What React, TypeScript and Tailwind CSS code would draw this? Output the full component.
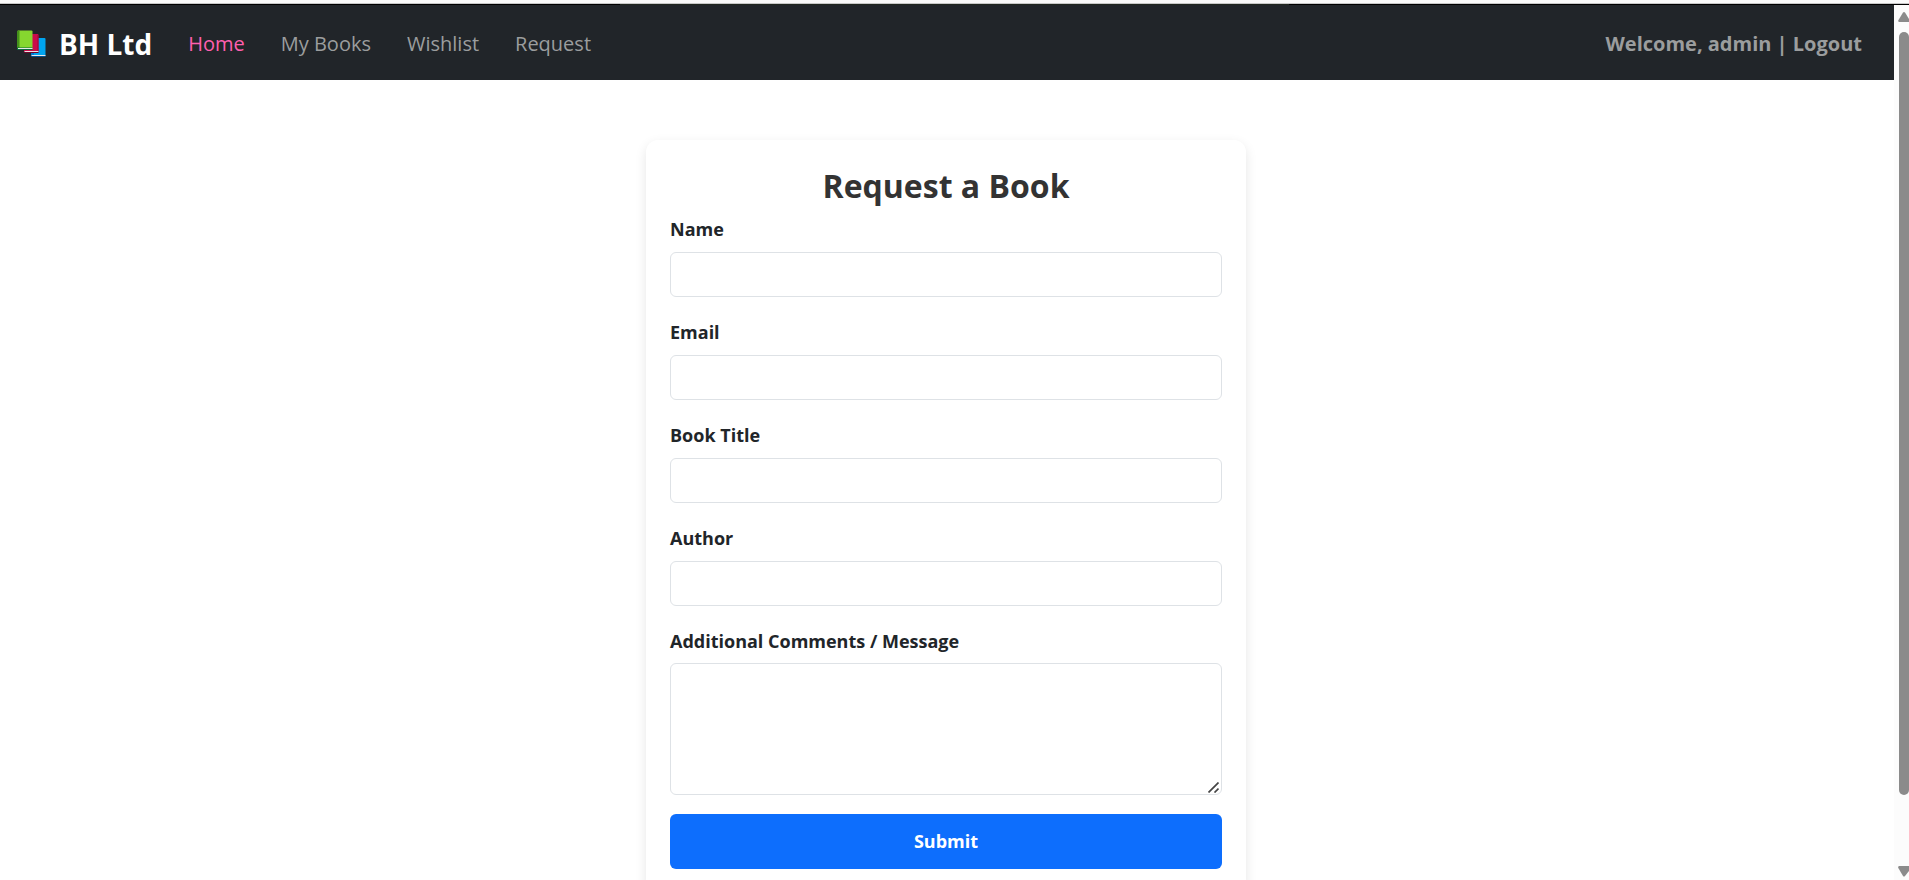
import React from "react";

const navLinks = [
  { label: "Home", active: true },
  { label: "My Books", active: false },
  { label: "Wishlist", active: false },
  { label: "Request", active: false },
];

const fields = [
  { id: "name", label: "Name", type: "text" },
  { id: "email", label: "Email", type: "email" },
  { id: "title", label: "Book Title", type: "text" },
  { id: "author", label: "Author", type: "text" },
];

function BooksLogo() {
  return (
    <svg className="h-7 w-[30px] shrink-0" viewBox="0 0 30 28" aria-hidden="true">
      <path d="M15 8h12.500a1 1 0 0 1 1 1v16.500H14V9z" fill="#00a4ef" />
      <path d="M14 9l1-1h2v17h-3z" fill="#0078d4" />
      <path d="M13.500 25h15v2h-14z" fill="#004e8c" />
      <path d="M14.500 25h14v1h-14z" fill="#e8e8e8" />
      <path d="M8 4h12.500a1 1 0 0 1 1 1v17H7V5z" fill="#ca0b4a" />
      <path d="M20.500 5h1v17h-1z" fill="#990838" />
      <path d="M6.500 21h15v2h-14z" fill="#6d0628" />
      <path d="M7.500 21h14v1h-14z" fill="#e8e8e8" />
      <path d="M1 0.500h13.500a1 1 0 0 1 1 1V19H0.500V1z" fill="#86d72f" />
      <path d="M1 0.500h1.500V18H0V1.500z" fill="#44911b" />
      <path d="M0 17.500h15.500v2.500H1a1 1 0 0 1-1-1z" fill="#0b6b3a" />
      <path d="M1 18h14.500v1H1z" fill="#e8e8e8" />
    </svg>
  );
}

function Navbar() {
  return (
    <header className="flex h-[75px] shrink-0 items-center bg-[#212529] pt-0.5 pr-8 pl-[17px]">
      <a href="#" className="flex items-center gap-3 text-[28px] font-bold text-white">
        <BooksLogo />
        BH Ltd
      </a>
      <nav className="ml-9 flex items-center gap-9 text-[20px]">
        {navLinks.map((link) => (
          <a key={link.label} href="#" className={link.active ? "text-[#ff5fae]" : "text-[#9b9d9e]"}>
            {link.label}
          </a>
        ))}
      </nav>
      <a href="#" className="ml-auto text-[20px] font-bold text-[#9b9d9e]">
        Welcome, admin | Logout
      </a>
    </header>
  );
}

function ResizeGrip() {
  return (
    <svg
      className="pointer-events-none absolute right-[3px] bottom-0.5 h-[11px] w-[11px]"
      viewBox="0 0 11 11"
      fill="none"
      stroke="#444"
      strokeWidth="1.700"
      aria-hidden="true"
    >
      <path d="M0.500 10.500L10.500 0.500M6.500 10.500L10.500 6.500" />
    </svg>
  );
}

function RequestForm() {
  return (
    <section className="mx-auto mt-[60px] w-full max-w-[600px] rounded-xl bg-white p-6 shadow-[0_4px_12px_rgba(0,0,0,0.1)]">
      <h1 className="mb-2 text-center text-[32px] leading-[44px] font-bold text-[#333]">Request a Book</h1>
      <form className="flex flex-col" onSubmit={(e) => e.preventDefault()}>
        {fields.map((field) => (
          <div key={field.id} className="mb-[22px]">
            <label htmlFor={field.id} className="mb-[9px] block text-[18px] leading-[27px] font-bold">
              {field.label}
            </label>
            <input
              id={field.id}
              type={field.type}
              className="block h-[45px] w-full rounded-md border border-[#dee2e6] bg-white px-3 text-[18px]"
            />
          </div>
        ))}
        <label htmlFor="message" className="mb-2 block text-[18px] leading-[27px] font-bold">
          Additional Comments / Message
        </label>
        <div className="relative mb-[19px]">
          <textarea
            id="message"
            className="block h-[132px] w-full resize-y rounded-md border border-[#dee2e6] bg-white px-3 py-2 text-[18px] [&::-webkit-resizer]:bg-transparent"
          />
          <ResizeGrip />
        </div>
        <button type="submit" className="h-[55px] w-full rounded-md bg-[#0d6efd] text-[18px] font-bold text-white">
          Submit
        </button>
      </form>
    </section>
  );
}

function ScrollTrack() {
  return (
    <div className="flex w-[15px] shrink-0 flex-col items-end bg-[#fcfcfc] pt-[7px]" aria-hidden="true">
      <svg className="h-[10px] w-[11px]" viewBox="0 0 11 10">
        <path d="M5 0.5Q6 -0.3 7 0.5L11 7V10H1Q-0.3 9.500 0.500 8Z" fill="#8b8b8b" />
      </svg>
      <div className="mt-[10px] w-[10px] flex-1 rounded-t-[5px] rounded-b-[5px] bg-[#8b8b8b]" />
      <svg className="mt-[71px] h-[14px] w-[11px]" viewBox="0 0 11 14">
        <path d="M1 0H11V5L7 10Q6 11 5 10L0.300 2Q-0.200 0.500 1 0Z" fill="#8b8b8b" />
      </svg>
    </div>
  );
}

export default function App() {
  return (
    <div className="flex h-screen flex-col overflow-hidden bg-white font-['Open_Sans','Noto_Sans',sans-serif] text-[#212529]">
      <div className="h-1 shrink-0 border-b border-[#c8c8c8] bg-[#fafafa]" />
      <div className="flex h-px shrink-0 bg-black">
        <div className="mx-auto w-[35%] bg-[#20261f]" />
      </div>
      <div className="flex min-h-0 flex-1">
        <div className="flex min-w-0 flex-1 flex-col overflow-hidden">
          <Navbar />
          <main className="pr-0.5">
            <RequestForm />
          </main>
        </div>
        <ScrollTrack />
      </div>
    </div>
  );
}
